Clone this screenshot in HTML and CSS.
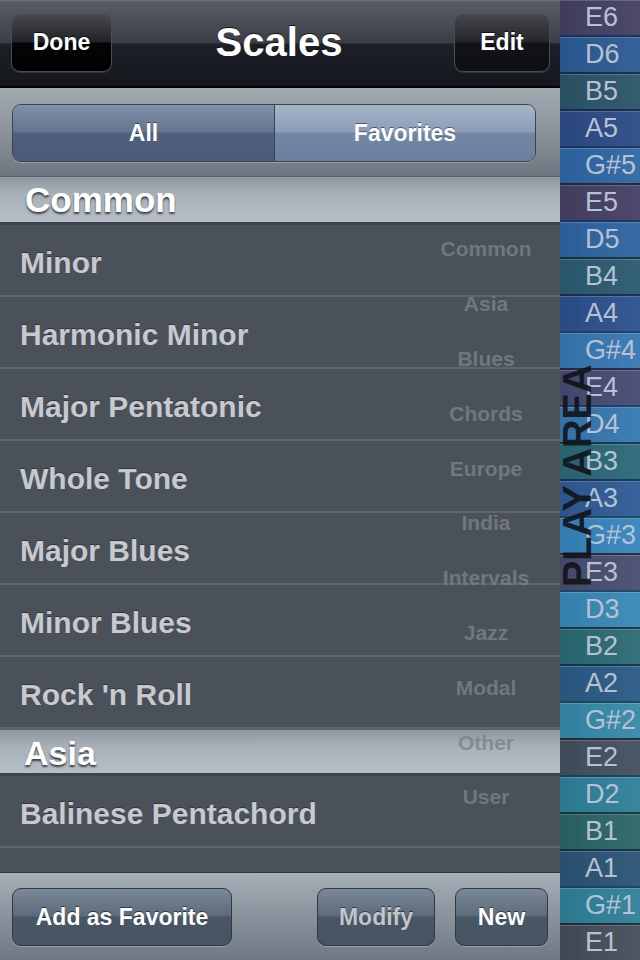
FILE: index.html
```html
<!DOCTYPE html>
<html>
<head>
<meta charset="utf-8">
<link rel="stylesheet" href="styles.css">
</head>
<body>
<div class="screen">
  <div class="panel">
    <header class="nav">
      <button class="nav-btn done">Done</button>
      <h1 class="title">Scales</h1>
      <button class="nav-btn edit">Edit</button>
    </header>
    <div class="seg-area">
      <div class="seg">
        <div class="seg-item on">All</div>
        <div class="seg-item">Favorites</div>
      </div>
    </div>
    <div class="list">
      <div class="sec-head">Common</div>
      <div class="row">Minor</div>
      <div class="row">Harmonic Minor</div>
      <div class="row">Major Pentatonic</div>
      <div class="row">Whole Tone</div>
      <div class="row">Major Blues</div>
      <div class="row">Minor Blues</div>
      <div class="row">Rock 'n Roll</div>
      <div class="sec-head asia">Asia</div>
      <div class="row">Balinese Pentachord</div>
      <div class="row"></div>
      <div class="index">
        <span>Common</span><span>Asia</span><span>Blues</span><span>Chords</span><span>Europe</span><span>India</span><span>Intervals</span><span>Jazz</span><span>Modal</span><span>Other</span><span>User</span>
      </div>
    </div>
    <footer class="toolbar">
      <button class="tb-btn fav">Add as Favorite</button>
      <div class="tb-right">
        <button class="tb-btn modify">Modify</button>
        <button class="tb-btn new">New</button>
      </div>
    </footer>
  </div>
  <div class="notes">
    <div class="note e" style="--c:#433f62">E6</div>
    <div class="note" style="--c:#2a5a94">D6</div>
    <div class="note" style="--c:#2a5468">B5</div>
    <div class="note" style="--c:#2c4a86">A5</div>
    <div class="note" style="--c:#2e66a4">G#5</div>
    <div class="note" style="--c:#453f64">E5</div>
    <div class="note" style="--c:#2d64a0">D5</div>
    <div class="note" style="--c:#2a5a70">B4</div>
    <div class="note" style="--c:#2b508e">A4</div>
    <div class="note" style="--c:#3677b2">G#4</div>
    <div class="note" style="--c:#464a72">E4</div>
    <div class="note" style="--c:#3478b0">D4</div>
    <div class="note" style="--c:#2a6878">B3</div>
    <div class="note" style="--c:#2f5a96">A3</div>
    <div class="note" style="--c:#3584bc">G#3</div>
    <div class="note" style="--c:#474d6e">E3</div>
    <div class="note" style="--c:#3788b8">D3</div>
    <div class="note" style="--c:#2a6a72">B2</div>
    <div class="note" style="--c:#2a5a84">A2</div>
    <div class="note" style="--c:#3488a8">G#2</div>
    <div class="note" style="--c:#434f5e">E2</div>
    <div class="note" style="--c:#2e7f9a">D2</div>
    <div class="note" style="--c:#2a6466">B1</div>
    <div class="note" style="--c:#2a5474">A1</div>
    <div class="note" style="--c:#2e8098">G#1</div>
    <div class="note" style="--c:#444e58">E1</div>
  </div>
  <span class="play">PLAY AREA</span>
</div>
</body>
</html>
```
FILE: styles.css
```css
* { box-sizing: border-box; }
html, body { margin: 0; padding: 0; }
body {
  width: 640px;
  height: 960px;
  overflow: hidden;
  font-family: "Liberation Sans", Arial, sans-serif;
  background: #000;
}
.screen { display: flex; width: 640px; height: 960px; position: relative; }
.panel { width: 560px; display: flex; flex-direction: column; }

/* nav bar */
.nav {
  height: 88px;
  display: flex;
  align-items: center;
  justify-content: space-between;
  padding: 0 10px 0 11px;
  background: linear-gradient(#70747c 0, #585c64 2px, #3a3d45 43px, #1e2028 44px, #15171d 86px, #000 86px);
}
.nav-btn {
  height: 58px;
  border-radius: 9px;
  border: 1px solid #4a4c52;
  color: #fff;
  font: bold 23px "Liberation Sans", Arial, sans-serif;
  padding: 0;
  margin-top: -3px;
  box-shadow: 0 1px 0 rgba(255,255,255,0.12);
  text-shadow: 0 -1px 0 rgba(0,0,0,0.6);
}
.done { width: 101px; background: linear-gradient(#46484c, #222326 48%, #050506 50%, #000); }
.edit { width: 96px; background: linear-gradient(#44464c, #24262a 48%, #121317 50%, #0e0f12); }
.title {
  margin: -3px 8px 0 0;
  color: #fff;
  font-size: 40px;
  font-weight: bold;
  text-shadow: 0 -1px 0 rgba(0,0,0,0.7);
}

/* segmented control */
.seg-area {
  height: 88px;
  padding: 16px 24px 0 12px;
  background: linear-gradient(#a3a9b0, #8c939b 50%, #6e757e);
}
.seg {
  display: flex;
  height: 58px;
  border: 1px solid #3c424a;
  border-radius: 9px;
  overflow: hidden;
  box-shadow: 0 1px 0 rgba(255,255,255,0.25);
}
.seg-item {
  display: flex;
  align-items: center;
  justify-content: center;
  color: #fff;
  font-weight: bold;
  font-size: 23px;
  text-shadow: 0 -1px 0 rgba(0,0,0,0.45);
}
.seg-item.on {
  width: 262px;
  border-right: 1px solid #3a4250;
  background: linear-gradient(#8090aa, #64748f 48%, #4f5f7c 50%, #4a5a77);
}
.seg-item:not(.on) {
  flex: 1;
  background: linear-gradient(#a6b6ca, #8a9cb6 48%, #7286a6 50%, #6a7e9e);
}

/* list */
.list {
  flex: 1;
  position: relative;
  overflow: hidden;
  background: #4b5159;
}
.sec-head {
  height: 49px;
  padding: 2px 0 0 25px;
  border-top: 1px solid #5a6068;
  border-bottom: 3px solid #3e444b;
  background: linear-gradient(#8e969e, #a9b1b9 40%, #b6bec6);
  color: #fff;
  font-weight: bold;
  font-size: 35px;
  line-height: 42px;
  text-shadow: 0 2px 2px rgba(40,44,50,0.85);
}
.sec-head.asia { height: 47px; font-size: 34px; padding-left: 24px; line-height: 42px; }
.row {
  height: 72px;
  flex-shrink: 0;
  padding: 5px 0 0 20px;
  display: flex;
  align-items: center;
  color: #c6cacf;
  font-weight: bold;
  font-size: 30px;
  border-bottom: 2px solid #5f656c;
  text-shadow: 0 -1px 0 rgba(0,0,0,0.35);
}

/* section index overlay */
.index {
  position: absolute;
  top: 46px;
  left: 432px;
  width: 108px;
  display: flex;
  flex-direction: column;
}
.index span {
  height: 54.8px;
  display: flex;
  align-items: center;
  justify-content: center;
  color: rgba(122,130,138,0.8);
  font-weight: bold;
  font-size: 21px;
}

/* bottom toolbar */
.toolbar {
  height: 88px;
  display: flex;
  justify-content: space-between;
  align-items: flex-start;
  padding: 15px 12px 0 12px;
  border-top: 1px solid #2e3338;
  background: linear-gradient(#a6aeb6, #8a939d 50%, #6e7883);
}
.tb-right { display: flex; gap: 20px; }
.tb-btn {
  height: 58px;
  border-radius: 9px;
  border: 1px solid #303842;
  padding: 0;
  color: #fff;
  font: bold 23px "Liberation Sans", Arial, sans-serif;
  background: linear-gradient(#7a8898, #5c6a7a 48%, #485666 50%, #465464);
  box-shadow: 0 1px 0 rgba(255,255,255,0.25);
  text-shadow: 0 -1px 0 rgba(0,0,0,0.5);
}
.fav { width: 220px; }
.modify { width: 118px; color: #c2c6cb; }
.new { width: 93px; }

/* notes column */
.notes {
  width: 80px;
  display: flex;
  flex-direction: column;
}
.note {
  flex: 1;
  display: flex;
  align-items: center;
  padding-left: 25px;
  color: #b6c2d2;
  font-size: 27px;
  border-top: 2px solid rgba(10,20,35,0.55);
  box-shadow: inset 0 1px 0 rgba(255,255,255,0.18);
  background: linear-gradient(90deg, rgba(0,0,0,0.06), rgba(255,255,255,0.05)), var(--c);
}
.note.e { border-top: none; }
.play {
  position: absolute;
  top: 476px;
  left: 577px;
  transform: translate(-50%, -50%) rotate(-90deg);
  white-space: nowrap;
  font-weight: bold;
  font-size: 40px;
  line-height: 30px;
  color: rgba(18,20,26,0.92);
  letter-spacing: -0.3px;
}
```
